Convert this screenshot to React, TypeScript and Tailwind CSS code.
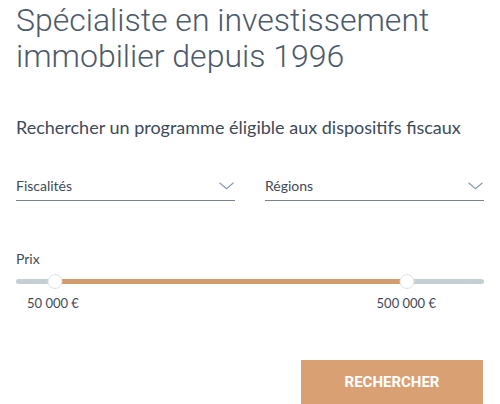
const selects = ["Fiscalités", "Régions"];

const Chevron = () => (
  <svg width="15" height="8" viewBox="0 0 15 8" fill="none" className="mr-[1px]">
    <path d="M0.5 0.8 L7.5 6.8 L14.5 0.8" stroke="#8a9bb0" strokeWidth="1.2" />
  </svg>
);

const PriceSlider = () => {
  const min = 39;
  const max = 391;

  return (
    <div className="mt-[6px]">
      <div className="relative h-[14px]">
        <div className="absolute left-0 right-0 top-[5px] h-[5px] rounded-full bg-[#c5ced2]" />
        <div
          className="absolute top-[5px] h-[5px] bg-[#d19b6e]"
          style={{ left: min, width: max - min }}
        />
        {[min, max].map((pos) => (
          <div
            key={pos}
            className="absolute top-0 h-[15px] w-[15px] -translate-x-1/2 rounded-full border border-[#dde2e4] bg-white"
            style={{ left: pos }}
          />
        ))}
      </div>
      <div className="mt-[7px] flex justify-between pl-[11px] pr-[48px] text-[13px] leading-[16px] text-[#3f4a57]">
        <span>50 000 €</span>
        <span>500 000 €</span>
      </div>
    </div>
  );
};

export default function App() {
  return (
    <main className="h-[404px] w-[500px] overflow-hidden bg-white px-4 font-['Lato',sans-serif]">
      <h1 className="pt-[2px] font-['Roboto',sans-serif] text-[32px] font-light leading-[36px] text-[#4c5a69]">
        Spécialiste en investissement immobilier depuis 1996
      </h1>

      <p className="mt-[42px] text-[18px] leading-[22px] text-[#3e4a58]">
        Rechercher un programme éligible aux dispositifs fiscaux
      </p>

      <div className="mt-[38px] grid grid-cols-2 gap-[30px]">
        {selects.map((label) => (
          <div
            key={label}
            className="flex items-center justify-between border-b border-[#7a838d] pb-[4px] text-[14px] leading-[20px] text-[#3f4a57]"
          >
            <span>{label}</span>
            <Chevron />
          </div>
        ))}
      </div>

      <p className="mt-[49px] text-[14px] leading-[18px] text-[#3f4a57]">Prix</p>

      <PriceSlider />

      <div className="mt-[49px] flex justify-end pr-[1px]">
        <button className="h-[44px] w-[182px] bg-[#d9a074] font-['Roboto',sans-serif] text-[15px] font-bold text-white">
          RECHERCHER
        </button>
      </div>
    </main>
  );
}
